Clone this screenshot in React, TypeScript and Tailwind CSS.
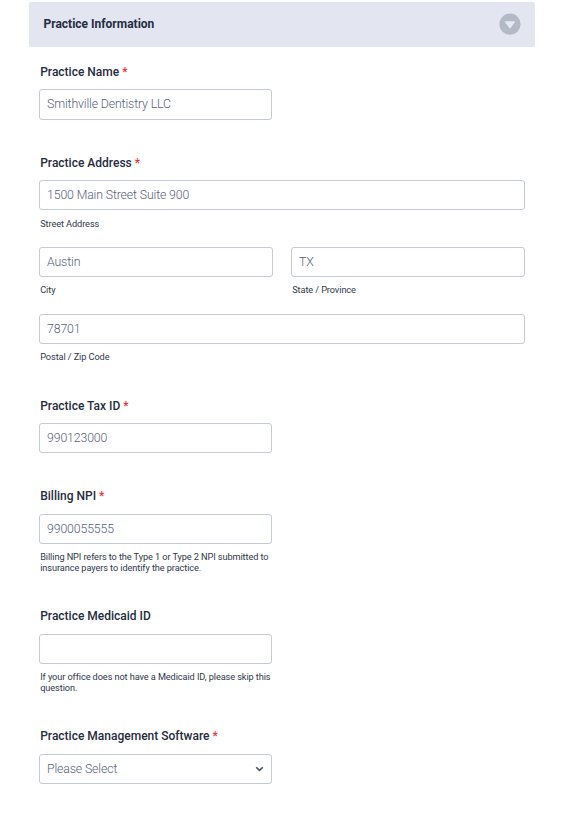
import type { ReactNode } from "react";

function Label({ children, required }: { children: ReactNode; required?: boolean }) {
  return (
    <div className="h-[18px] pl-[1.2px] text-[12px] leading-[18px] font-medium whitespace-nowrap text-[#252c3f]">
      {children}
      {required && <span className="text-[#ee3234]"> *</span>}
    </div>
  );
}

function Box({ value, className = "h-[30px]", children }: { value: string; className?: string; children?: ReactNode }) {
  return (
    <div className={`flex items-center justify-between rounded-[3px] border border-[#c5cad9] bg-white pr-[7px] pl-[7px] text-[12.3px] font-light tracking-[-0.13px] whitespace-nowrap text-[#57607c] ${className}`}>
      <span>{value}</span>
      {children}
    </div>
  );
}

function Hint({ children }: { children: ReactNode }) {
  return <div className="pt-[8px] pl-[1.2px] text-[9.2px] leading-[10.5px] tracking-[-0.09px] whitespace-nowrap text-[#30384b]">{children}</div>;
}

export default function App() {
  return (
    <main className="h-[839px] w-[563px] overflow-hidden bg-white pt-[2px] font-['Roboto',sans-serif]">
      <header className="ml-[29px] flex h-[45px] w-[506px] items-center justify-between rounded-[2px] bg-[#e3e5f1] pr-[14.5px] pb-[1px] pl-[14.5px]">
        <h1 className="text-[12px] font-bold text-[#252c3f]">Practice Information</h1>
        <svg width="22" height="22" viewBox="0 0 22 22">
          <circle cx="11" cy="11.2" r="10.6" fill="#b4bac5" />
          <path d="M6.3 8.8h9.4L11 15.2z" fill="#e6e8f3" stroke="#e6e8f3" strokeWidth="1" strokeLinejoin="round" />
        </svg>
      </header>
      <form className="ml-[39px] w-[486px]">
        <section className="h-[91px] w-[233px] pt-[16px]">
          <Label required>Practice Name</Label>
          <Box value="Smithville Dentistry LLC" className="mt-[8px] h-[31px]" />
        </section>
        <section className="h-[243px] pt-[16px]">
          <Label required>Practice Address</Label>
          <Box value="1500 Main Street Suite 900" className="mt-[8px] h-[30px]" />
          <div className="h-[37px] pt-px"><Hint>Street Address</Hint></div>
          <div className="flex justify-between">
            <div className="h-[67px] w-[234px]">
              <Box value="Austin" />
              <Hint>City</Hint>
            </div>
            <div className="h-[67px] w-[234px]">
              <Box value="TX" />
              <Hint>State / Province</Hint>
            </div>
          </div>
          <Box value="78701" />
          <Hint>Postal / Zip Code</Hint>
        </section>
        <section className="h-[91px] w-[233px] pt-[16px]">
          <Label required>Practice Tax ID</Label>
          <Box value="990123000" className="mt-[8px] h-[30px]" />
        </section>
        <section className="h-[120px] w-[233px] pt-[15px]">
          <Label required>Billing NPI</Label>
          <Box value="9900055555" className="mt-[9px] h-[30px]" />
          <Hint>Billing NPI refers to the Type 1 or Type 2 NPI submitted to<br />insurance payers to identify the practice.</Hint>
        </section>
        <section className="h-[120px] w-[233px] pt-[15px]">
          <Label>Practice Medicaid ID</Label>
          <Box value="" className="mt-[9px] h-[30px]" />
          <Hint>If your office does not have a Medicaid ID, please skip this<br />question.</Hint>
        </section>
        <section className="w-[233px] pt-[15px]">
          <Label required>Practice Management Software</Label>
          <Box value="Please Select" className="mt-[9px] h-[30px]">
            <svg width="9" height="6" viewBox="0 0 9 6" fill="none">
              <path d="M1.2 1.2L4.5 4.4L7.8 1.2" stroke="#4b5275" strokeWidth="1.6" />
            </svg>
          </Box>
        </section>
      </form>
    </main>
  );
}
